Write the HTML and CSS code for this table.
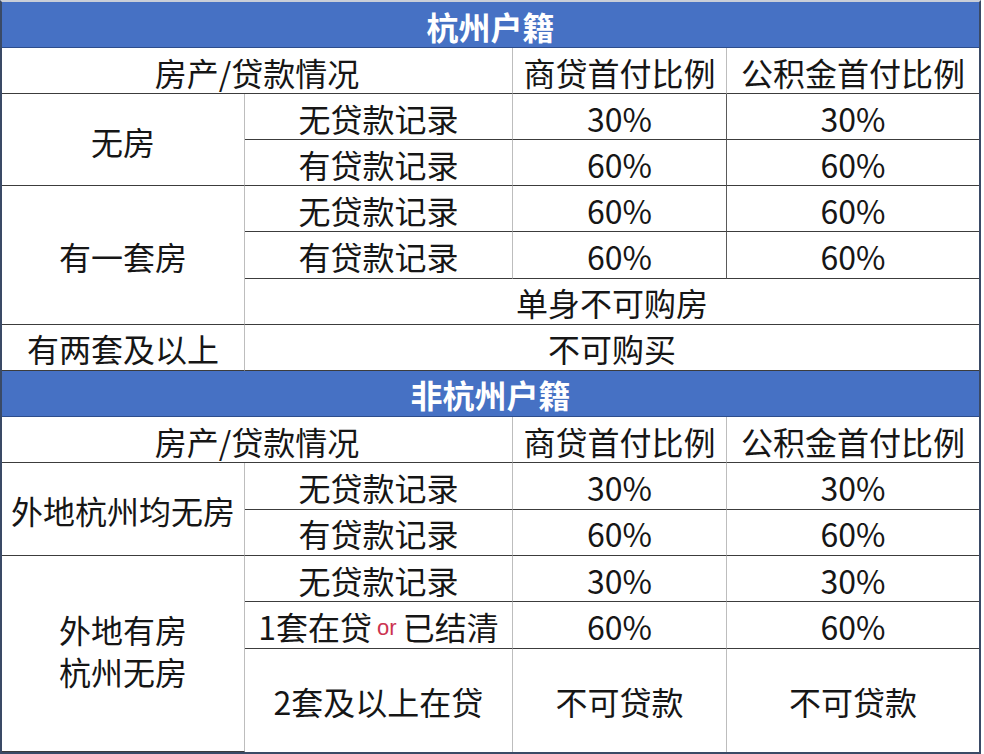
FILE: index.html
```html
<!DOCTYPE html>
<html lang="zh-CN">
<head>
<meta charset="utf-8">
<title>杭州购房首付比例</title>
<link rel="stylesheet" href="styles.css">
</head>
<body>
<div class="sheet">
  <div class="grid sec1">
    <div class="cell title span4">杭州户籍</div>
    <div class="cell span2">房产/贷款情况</div>
    <div class="cell">商贷首付比例</div>
    <div class="cell last">公积金首付比例</div>

    <div class="cell rs2">无房</div>
    <div class="cell">无贷款记录</div>
    <div class="cell dark">30%</div>
    <div class="cell last">30%</div>
    <div class="cell">有贷款记录</div>
    <div class="cell dark">60%</div>
    <div class="cell last">60%</div>

    <div class="cell rs3">有一套房</div>
    <div class="cell">无贷款记录</div>
    <div class="cell dark">60%</div>
    <div class="cell last">60%</div>
    <div class="cell">有贷款记录</div>
    <div class="cell dark">60%</div>
    <div class="cell last">60%</div>
    <div class="cell span3 last">单身不可购房</div>

    <div class="cell">有两套及以上</div>
    <div class="cell span3 last">不可购买</div>
  </div>

  <div class="grid sec2">
    <div class="cell title span4">非杭州户籍</div>
    <div class="cell span2">房产/贷款情况</div>
    <div class="cell">商贷首付比例</div>
    <div class="cell last">公积金首付比例</div>

    <div class="cell rs2">外地杭州均无房</div>
    <div class="cell">无贷款记录</div>
    <div class="cell">30%</div>
    <div class="cell last">30%</div>
    <div class="cell">有贷款记录</div>
    <div class="cell">60%</div>
    <div class="cell last">60%</div>

    <div class="cell rs3 stack"><span>外地有房</span><span>杭州无房</span></div>
    <div class="cell">无贷款记录</div>
    <div class="cell">30%</div>
    <div class="cell last">30%</div>
    <div class="cell">1套在贷<span class="or">or</span>已结清</div>
    <div class="cell">60%</div>
    <div class="cell last">60%</div>
    <div class="cell nobottom">2套及以上在贷</div>
    <div class="cell nobottom">不可贷款</div>
    <div class="cell last nobottom">不可贷款</div>
  </div>
</div>
</body>
</html>
```

FILE: styles.css
```css
html, body {
  margin: 0;
  padding: 0;
  background: #ffffff;
}

body {
  width: 984px;
  height: 754px;
  overflow: hidden;
  font-family: "Noto Sans CJK SC", "Noto Sans", sans-serif;
  color: #161616;
}

.sheet {
  width: 981px;
  box-sizing: border-box;
  border-top: 2px solid #c9ced8;
  border-left: 2px solid #3a4a66;
  border-right: 2px solid #3a4a66;
  border-bottom: 2px solid #3a4a66;
  background: #ffffff;
}

.grid {
  display: grid;
  grid-template-columns: 243px 268px 214px 252px;
}

.sec1 {
  grid-template-rows: repeat(8, 46.1px);
}

.sec2 {
  grid-template-rows: repeat(6, 46.35px) 103px;
}

.cell {
  box-sizing: border-box;
  display: flex;
  align-items: center;
  justify-content: center;
  font-size: 32px;
  line-height: 1;
  white-space: nowrap;
  border-right: 1px solid #bdbdbd;
  border-bottom: 1px solid #3c3c3c;
  padding-top: 2px;
}

.cell.dark {
  border-right-color: #5a5a5a;
}

.cell.last {
  border-right: none;
}

.cell.nobottom {
  border-bottom: none;
}

.title {
  background: #4671c4;
  color: #ffffff;
  font-weight: 700;
  border-right: none;
  border-bottom: 1px solid #2d4d8c;
}

.span2 { grid-column: span 2; }
.span3 { grid-column: span 3; }
.span4 { grid-column: span 4; }
.rs2 { grid-row: span 2; }
.rs3 { grid-row: span 3; }

.stack {
  flex-direction: column;
  gap: 10px;
  padding-bottom: 8px;
}

.or {
  font-family: "Liberation Sans", Arial, sans-serif;
  font-size: 22px;
  color: #cc3350;
  margin: 4px 6px 0 5px;
}
```
